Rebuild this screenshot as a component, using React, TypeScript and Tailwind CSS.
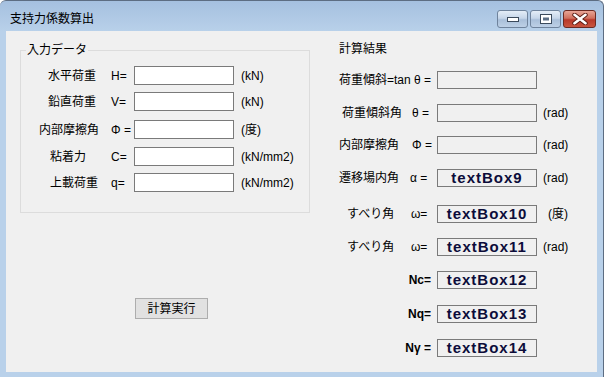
import React from "react";

const jp = "font-['Liberation_Sans','Noto_Sans_CJK_JP',sans-serif]";

type InputRow = { label: string; pad: number; sym: string; unit: string; mt: number };

const inputRows: InputRow[] = [
  { label: "水平荷重", pad: 27, sym: "H=", unit: "(kN)", mt: 9 },
  { label: "鉛直荷重", pad: 27, sym: "V=", unit: "(kN)", mt: 7 },
  { label: "内部摩擦角", pad: 18, sym: "Φ =", unit: "(度)", mt: 9 },
  { label: "粘着力", pad: 29, sym: "C=", unit: "(kN/mm2)", mt: 8 },
  { label: "上載荷重", pad: 29, sym: "q=", unit: "(kN/mm2)", mt: 7 },
];

// symX: 記号の左端位置（列の左端から）
type ResultRow = { label: string; pad: number; sym: string; symX: number; symBold?: boolean; value: string; unit: string; unitGap: number; mt: number };

const resultRows: ResultRow[] = [
  { label: "荷重傾斜=tan θ =", pad: 0, sym: "", symX: 0, value: "", unit: "", unitGap: 6, mt: 15 },
  { label: "荷重傾斜角", pad: 3, sym: "θ =", symX: 73, value: "", unit: "(rad)", unitGap: 6, mt: 15 },
  { label: "内部摩擦角", pad: 0, sym: "Φ =", symX: 73, value: "", unit: "(rad)", unitGap: 6, mt: 14 },
  { label: "遷移場内角", pad: 0, sym: "α =", symX: 71, value: "textBox9", unit: "(rad)", unitGap: 6, mt: 15 },
  { label: "すべり角", pad: 8, sym: "ω=", symX: 72, value: "textBox10", unit: "(度)", unitGap: 11, mt: 18 },
  { label: "すべり角", pad: 8, sym: "ω=", symX: 72, value: "textBox11", unit: "(rad)", unitGap: 6, mt: 15 },
  { label: "", pad: 0, sym: "Nc=", symX: 0, symBold: true, value: "textBox12", unit: "", unitGap: 6, mt: 15 },
  { label: "", pad: 0, sym: "Nq=", symX: 0, symBold: true, value: "textBox13", unit: "", unitGap: 6, mt: 16 },
  { label: "", pad: 0, sym: "Nγ =", symX: 0, symBold: true, value: "textBox14", unit: "", unitGap: 6, mt: 16 },
];

const CaptionButton: React.FC<{ kind: "min" | "max" | "close" }> = ({ kind }) => {
  const base =
    kind === "close"
      ? "w-[33px] border-[#6b2a22] bg-[linear-gradient(#e8a596,#d0705e_45%,#b8392a_55%,#c9553f)]"
      : "w-[31px] border-[#6f839c] bg-[linear-gradient(#e4edf7,#c6d6e9_45%,#a9bfd9_55%,#bdd0e6)]";
  return (
    <div className={`h-[18px] rounded-[3px] border flex items-center justify-center ${base}`}>
      {kind === "min" && (
        <svg width="12" height="6" viewBox="0 0 12 6">
          <rect x="0.5" y="1.5" width="11" height="4" fill="#fff" stroke="#3b4a5c" />
        </svg>
      )}
      {kind === "max" && (
        <svg width="12" height="10" viewBox="0 0 12 10">
          <rect x="0.5" y="0.5" width="11" height="9" fill="#fff" stroke="#3b4a5c" />
          <rect x="3" y="3.5" width="6" height="3" fill="#5d6f85" />
        </svg>
      )}
      {kind === "close" && (
        <svg width="18" height="12" viewBox="0 0 18 12">
          <path d="M3.5 1.8 L14.5 10.2 M14.5 1.8 L3.5 10.2" stroke="#5a1c14" strokeWidth="4.4" strokeLinecap="round" />
          <path d="M3.5 1.8 L14.5 10.2 M14.5 1.8 L3.5 10.2" stroke="#fff" strokeWidth="2.6" strokeLinecap="round" />
        </svg>
      )}
    </div>
  );
};

export default function App() {
  return (
    <div
      className={`w-[604px] h-[377px] flex flex-col overflow-hidden border-t border-r border-[#5d6d82] rounded-tl-[6px] rounded-tr-[6px] bg-[linear-gradient(#a5c0df,#b9d1ea_31px,#b9d1ea)] text-[12px] text-black ${jp}`}
    >
      {/* タイトルバー */}
      <div className="h-[30px] flex items-start">
        <div className="pl-[10px] pt-[11px] leading-[14px] text-[12px] text-black">支持力係数算出</div>
        <div className="ml-auto mt-[9px] mr-[7px] flex gap-[2px]">
          <CaptionButton kind="min" />
          <CaptionButton kind="max" />
          <CaptionButton kind="close" />
        </div>
      </div>

      {/* クライアント領域 */}
      <div className="ml-[6px] w-[591px] h-[341px] bg-[#f0f0f0] flex">
        {/* 入力データ */}
        <div className="ml-[14px] pt-[12px] w-[290px] flex flex-col">
          <fieldset className="w-[290px] h-[170px] border border-[#dcdcdc]">
            <legend className="ml-[5px] px-[1px] leading-[14px]">入力データ</legend>
            {inputRows.map((r) => (
              <div key={r.label} className="flex items-center h-[19px]" style={{ marginTop: r.mt }}>
                <span className="w-[90px] leading-[14px] whitespace-nowrap" style={{ paddingLeft: r.pad }}>
                  {r.label}
                </span>
                <span className="w-[23px] leading-[14px]">{r.sym}</span>
                <div className="w-[100px] h-[19px] bg-white border border-[#7a7a7a]" />
                <span className="ml-[7px] leading-[14px]">{r.unit}</span>
              </div>
            ))}
          </fieldset>
          <button className="mt-[85px] ml-[115px] w-[73px] h-[21px] bg-[#e1e1e1] border border-[#adadad] text-[12px] leading-[14px]">
            計算実行
          </button>
        </div>

        {/* 計算結果 */}
        <div className="ml-[29px] pt-[11px] flex flex-col">
          <div className="leading-[14px] h-[14px]">計算結果</div>
          {resultRows.map((r, i) => (
            <div key={i} className="flex items-center h-[18px]" style={{ marginTop: r.mt }}>
              <div className="w-[98px] flex items-center leading-[14px] whitespace-nowrap" style={{ paddingLeft: r.pad }}>
                {r.sym && !r.symBold ? (
                  <>
                    <span className="shrink-0" style={{ width: r.symX - r.pad }}>{r.label}</span>
                    <span>{r.sym}</span>
                  </>
                ) : r.symBold ? (
                  <span className="ml-auto mr-[6px] font-bold">{r.sym}</span>
                ) : (
                  <span>{r.label}</span>
                )}
              </div>
              <div className="w-[100px] h-[18px] border border-[#7a7a7a] bg-[#f0f0f0] flex items-center justify-center">
                <span className="font-['Liberation_Sans',sans-serif] font-bold text-[15px] tracking-[1px] leading-[16px] text-[#0c0c3a]">
                  {r.value}
                </span>
              </div>
              {r.unit && (
                <span className="leading-[14px]" style={{ marginLeft: r.unitGap }}>
                  {r.unit}
                </span>
              )}
            </div>
          ))}
        </div>
      </div>
    </div>
  );
}
